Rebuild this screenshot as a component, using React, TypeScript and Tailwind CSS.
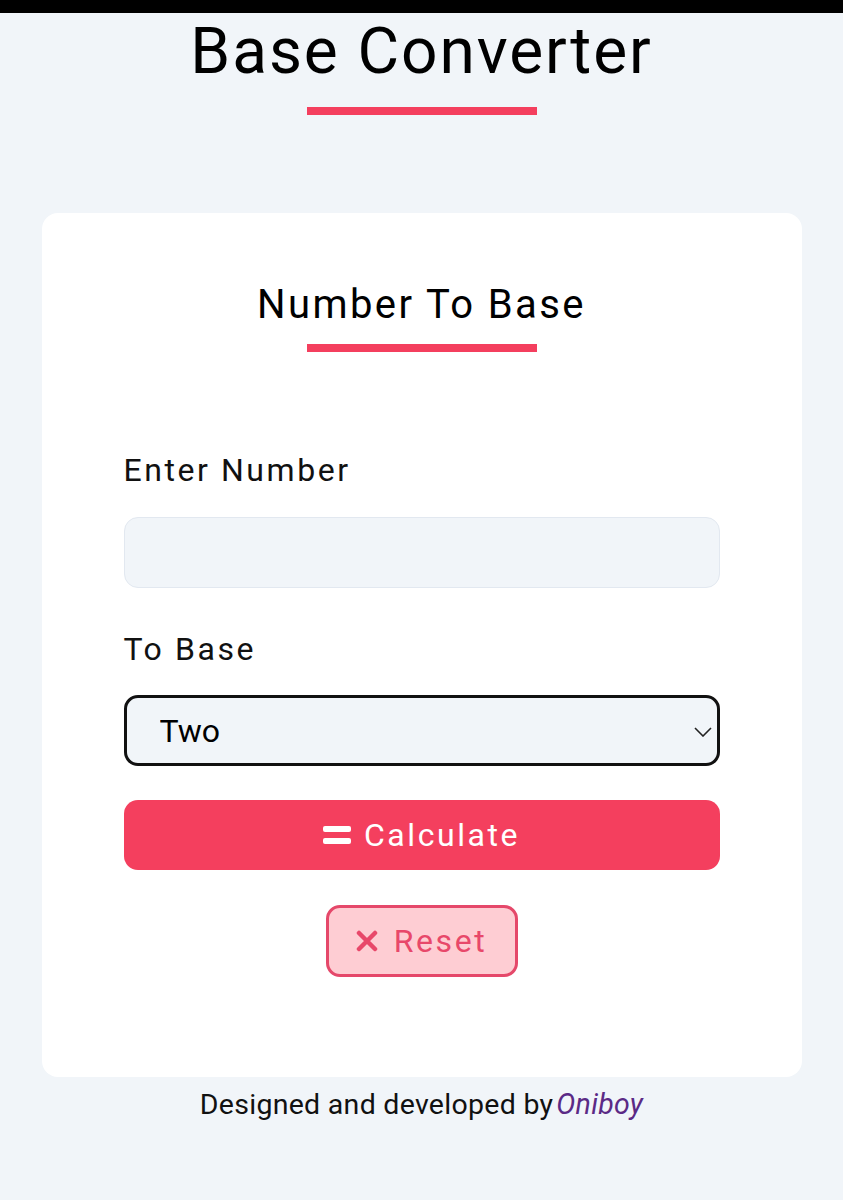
import { useState } from "react";

const font = { fontFamily: "Roboto, 'Noto Sans', sans-serif" };

function EqualsIcon() {
  return (
    <svg width="28" height="20" viewBox="0 0 28 20" className="shrink-0">
      <rect x="0" y="1" width="28" height="6" rx="2" fill="white" />
      <rect x="0" y="13" width="28" height="6" rx="2" fill="white" />
    </svg>
  );
}

function XIcon() {
  return (
    <svg width="22" height="22" viewBox="0 0 22 22" className="shrink-0">
      <path d="M3 3 L19 19 M19 3 L3 19" stroke="#e8486a" strokeWidth="4.5" strokeLinecap="round" />
    </svg>
  );
}

export default function App() {
  const [value, setValue] = useState("");
  const [base, setBase] = useState("2");

  return (
    <div className="min-h-[1200px] bg-[#f1f5f9] text-black" style={font}>
      <div className="h-[13px] bg-black" />
      <div className="flex flex-col items-center">
        <h1 className="mt-[7px] text-[64px] leading-[64px] font-normal tracking-[0.03em]">Base Converter</h1>
        <div className="mt-[23px] h-2 w-[230px] bg-[#f43f5e]" />

        <main className="mt-[98px] w-[760px] rounded-2xl bg-white px-[82px] pt-[72px] pb-[100px]">
          <div className="flex flex-col items-center">
            <h2 className="text-[40px] leading-[40px] font-normal tracking-[0.06em]">Number To Base</h2>
            <div className="mt-[19px] h-2 w-[230px] bg-[#f43f5e]" />
          </div>

          <label className="mt-[102px] block text-[32px] leading-[32px] tracking-[0.08em] text-[#111]">
            Enter Number
          </label>
          <input
            value={value}
            onChange={(e) => setValue(e.target.value)}
            className="mt-[31px] block h-[71px] w-full rounded-[14px] border border-[#e2e8f0] bg-[#f1f5f9] px-8 text-[32px] outline-none"
          />

          <label className="mt-[45px] block text-[32px] leading-[32px] tracking-[0.08em] text-[#111]">
            To Base
          </label>
          <div className="relative mt-[30px]">
            <select
              value={base}
              onChange={(e) => setBase(e.target.value)}
              className="block h-[71px] w-full appearance-none rounded-[14px] border-[3px] border-[#111] bg-[#f1f5f9] pl-[33px] text-[32px] text-black outline-none"
            >
              <option value="2">Two</option>
              <option value="8">Eight</option>
              <option value="10">Ten</option>
              <option value="16">Sixteen</option>
            </select>
            <svg
              width="18"
              height="10"
              viewBox="0 0 18 10"
              className="pointer-events-none absolute right-[8px] top-[32px]"
            >
              <path d="M1 1 L9 9 L17 1" fill="none" stroke="#222" strokeWidth="1.6" />
            </svg>
          </div>

          <button className="mt-[34px] flex h-[70px] w-full items-center justify-center gap-[13px] rounded-[14px] bg-[#f43f5e] text-[32px] tracking-[0.08em] text-white">
            <EqualsIcon />
            <span>Calculate</span>
          </button>

          <div className="mt-[35px] flex justify-center">
            <button className="flex h-[72px] w-[192px] items-center justify-center gap-[16px] rounded-[14px] border-[3px] border-[#e5486a] bg-[#fecdd3] text-[32px] tracking-[0.08em] text-[#e8486a]">
              <XIcon />
              <span>Reset</span>
            </button>
          </div>
        </main>

        <p className="mt-[14px] text-[28.5px] leading-[28px] tracking-[0.01em] text-[#111]">
          Designed and developed by<span className="ml-[3px] italic text-[#5b2a86]">Oniboy</span>
        </p>
      </div>
    </div>
  );
}
